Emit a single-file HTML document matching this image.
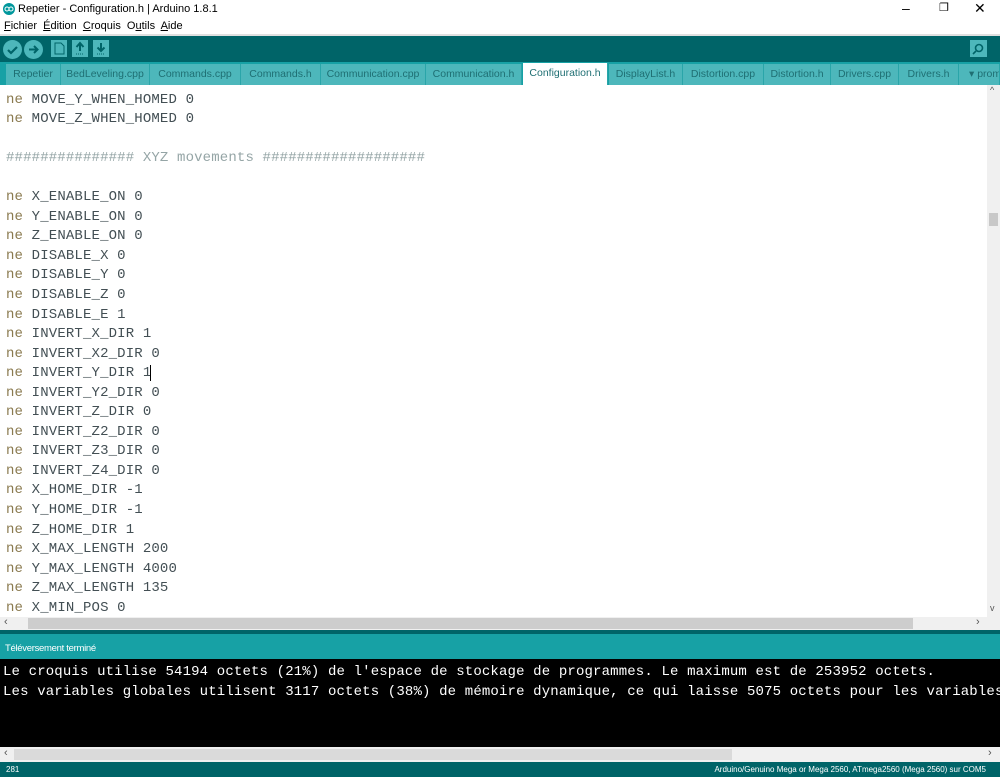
<!DOCTYPE html>
<html><head><meta charset="utf-8"><style>
*{margin:0;padding:0;box-sizing:border-box}
body{width:1000px;height:777px;overflow:hidden;background:#fff;font-family:"Liberation Sans",sans-serif;position:relative}
.abs{position:absolute}
.title{top:0;left:0;width:1000px;height:18px;font-size:11px;color:#000}
.menu{top:18px;left:0;height:16px;font-size:11px;color:#000}
.tool{top:34px;left:0;width:1000px;height:28px;background:#006468;border-top:2px solid #e0e0e0}
.tabs{top:62px;left:0;width:1000px;height:23px;background:#17A1A5}
.tab{position:absolute;top:2px;height:21px;background:#4DB7BB;color:#1f6f73;font-size:10.5px;text-align:center;line-height:21px;border-right:1px solid #2aa5a9;overflow:hidden;white-space:nowrap}
.tab.sel{background:#fff;color:#1f6f73;top:1px;height:22px}
.code{top:85px;left:0;width:987px;height:532px;overflow:hidden}
.lines{position:absolute;left:6px;top:-14px;font-family:"Liberation Mono",monospace;font-size:14px;letter-spacing:0.15px;line-height:19.55px;color:#434f54;white-space:pre}
.k{color:#8a7a4f}
.c{color:#95a5a6}
.btn{position:absolute;top:4px;width:19px;height:19px;border-radius:50%;background:#4DB7BB}
.sq{position:absolute;top:4px;width:16px;height:17px;background:#4DB7BB}
</style></head><body>
<div class="abs title"><svg class="abs" style="left:3px;top:3px" width="12" height="12"><circle cx="6" cy="6" r="6" fill="#00979c"/><circle cx="4" cy="6" r="2" fill="none" stroke="#fff" stroke-width="1"/><circle cx="8" cy="6" r="2" fill="none" stroke="#fff" stroke-width="1"/></svg><span class="abs" style="left:18px;top:3px">Repetier - Configuration.h | Arduino 1.8.1</span>
<span class="abs" style="left:902px;top:0;font-size:14px">–</span><span class="abs" style="left:939px;top:1px;font-size:11px">❐</span><span class="abs" style="left:974px;top:0;font-size:14px">✕</span></div>
<div class="abs menu"><span class="abs" style="left:4px;top:2px;white-space:nowrap"><u>F</u>ichier&nbsp; <u>É</u>dition&nbsp; <u>C</u>roquis&nbsp; O<u>u</u>tils&nbsp; <u>A</u>ide</span></div>
<div class="abs tool">
<div class="btn" style="left:3px"><svg width="19" height="19"><path d="M5 10l3 3 6-6" stroke="#006468" stroke-width="2.2" fill="none"/></svg></div>
<div class="btn" style="left:24px"><svg width="19" height="19"><path d="M5 9.5h8M10 6l3.5 3.5L10 13" stroke="#006468" stroke-width="2" fill="none"/></svg></div>
<div class="sq" style="left:51px"><svg width="16" height="17"><path d="M4 3h6l3 3v8H4z" fill="none" stroke="#006468" stroke-width="1"/></svg></div>
<div class="sq" style="left:72px"><svg width="16" height="17"><path d="M8 3v8M4.5 7L8 3l3.5 4" stroke="#006468" stroke-width="2" fill="none"/><path d="M4 14h8" stroke="#006468" stroke-dasharray="1 1"/></svg></div>
<div class="sq" style="left:93px"><svg width="16" height="17"><path d="M8 3v8M4.5 7.5L8 11l3.5-3.5" stroke="#006468" stroke-width="2" fill="none"/><path d="M4 14h8" stroke="#006468" stroke-dasharray="1 1"/></svg></div>
<div class="sq" style="left:970px;width:17px"><svg width="17" height="17"><circle cx="9" cy="8" r="3.5" stroke="#006468" stroke-width="1.6" fill="none"/><path d="M6 11l-3 3" stroke="#006468" stroke-width="1.6"/></svg></div>
</div>
<div class="abs tabs">
<div class="tab" style="left:6px;width:55px">Repetier</div>
<div class="tab" style="left:61px;width:89px">BedLeveling.cpp</div>
<div class="tab" style="left:150px;width:91px">Commands.cpp</div>
<div class="tab" style="left:241px;width:80px">Commands.h</div>
<div class="tab" style="left:321px;width:105px">Communication.cpp</div>
<div class="tab" style="left:426px;width:96px">Communication.h</div>
<div class="tab sel" style="left:523px;width:85px">Configuration.h</div>
<div class="tab" style="left:609px;width:74px">DisplayList.h</div>
<div class="tab" style="left:683px;width:81px">Distortion.cpp</div>
<div class="tab" style="left:764px;width:67px">Distortion.h</div>
<div class="tab" style="left:831px;width:68px">Drivers.cpp</div>
<div class="tab" style="left:899px;width:60px">Drivers.h</div>
<div class="tab" style="left:959px;width:41px;text-align:left;padding-left:10px">▾ prom</div>
</div>
<div class="abs code"><div class="lines"><span class="k">ne</span> MOVE_X_WHEN_HOMED 0
<span class="k">ne</span> MOVE_Y_WHEN_HOMED 0
<span class="k">ne</span> MOVE_Z_WHEN_HOMED 0

<span class="c">############### XYZ movements ###################</span>

<span class="k">ne</span> X_ENABLE_ON 0
<span class="k">ne</span> Y_ENABLE_ON 0
<span class="k">ne</span> Z_ENABLE_ON 0
<span class="k">ne</span> DISABLE_X 0
<span class="k">ne</span> DISABLE_Y 0
<span class="k">ne</span> DISABLE_Z 0
<span class="k">ne</span> DISABLE_E 1
<span class="k">ne</span> INVERT_X_DIR 1
<span class="k">ne</span> INVERT_X2_DIR 0
<span class="k">ne</span> INVERT_Y_DIR 1<span style="border-left:1px solid #000;margin-left:-1px"></span>
<span class="k">ne</span> INVERT_Y2_DIR 0
<span class="k">ne</span> INVERT_Z_DIR 0
<span class="k">ne</span> INVERT_Z2_DIR 0
<span class="k">ne</span> INVERT_Z3_DIR 0
<span class="k">ne</span> INVERT_Z4_DIR 0
<span class="k">ne</span> X_HOME_DIR -1
<span class="k">ne</span> Y_HOME_DIR -1
<span class="k">ne</span> Z_HOME_DIR 1
<span class="k">ne</span> X_MAX_LENGTH 200
<span class="k">ne</span> Y_MAX_LENGTH 4000
<span class="k">ne</span> Z_MAX_LENGTH 135
<span class="k">ne</span> X_MIN_POS 0
<span class="k">ne</span> Y_MIN_POS 0</div></div>
<div class="abs" style="left:987px;top:85px;width:13px;height:532px;background:#f0f0f0"><span class="abs" style="left:3px;top:0;font-size:9px;color:#555">^</span><div class="abs" style="left:2px;top:128px;width:9px;height:13px;background:#c8c8c8"></div><span class="abs" style="left:3px;top:518px;font-size:9px;color:#555">v</span></div>
<div class="abs" style="left:0;top:617px;width:1000px;height:13px;background:#f0f0f0"><span class="abs" style="left:4px;top:-1px;font-size:11px;color:#555">‹</span><div class="abs" style="left:28px;top:1px;width:885px;height:11px;background:#cdcdcd"></div><span class="abs" style="left:976px;top:-1px;font-size:11px;color:#555">›</span></div>
<div class="abs" style="left:0;top:630px;width:1000px;height:4px;background:#006468"></div>
<div class="abs" style="left:0;top:634px;width:1000px;height:25px;background:#17A1A5;color:#fff;font-size:9.5px;padding:9px 0 0 5px;letter-spacing:-0.3px">Téléversement terminé</div>
<div class="abs" style="left:0;top:659px;width:1000px;height:88px;background:#000;color:#fff;font-family:'Liberation Mono',monospace;font-size:14px;letter-spacing:0.15px;line-height:20px;white-space:pre;padding:3px 0 0 3px;overflow:hidden">Le croquis utilise 54194 octets (21%) de l'espace de stockage de programmes. Le maximum est de 253952 octets.
Les variables globales utilisent 3117 octets (38%) de mémoire dynamique, ce qui laisse 5075 octets pour les variables locales.</div>
<div class="abs" style="left:0;top:747px;width:1000px;height:15px;background:#f0f0f0"><span class="abs" style="left:4px;top:0;font-size:11px;color:#555">‹</span><div class="abs" style="left:14px;top:2px;width:718px;height:11px;background:#dadada"></div><span class="abs" style="left:988px;top:0;font-size:11px;color:#555">›</span></div>
<div class="abs" style="left:0;top:762px;width:1000px;height:15px;background:#006468;color:#fff;font-size:8px"><span class="abs" style="left:6px;top:3px">281</span><span class="abs" style="right:14px;top:3px;white-space:nowrap">Arduino/Genuino Mega or Mega 2560, ATmega2560 (Mega 2560) sur COM5</span></div>
</body></html>
